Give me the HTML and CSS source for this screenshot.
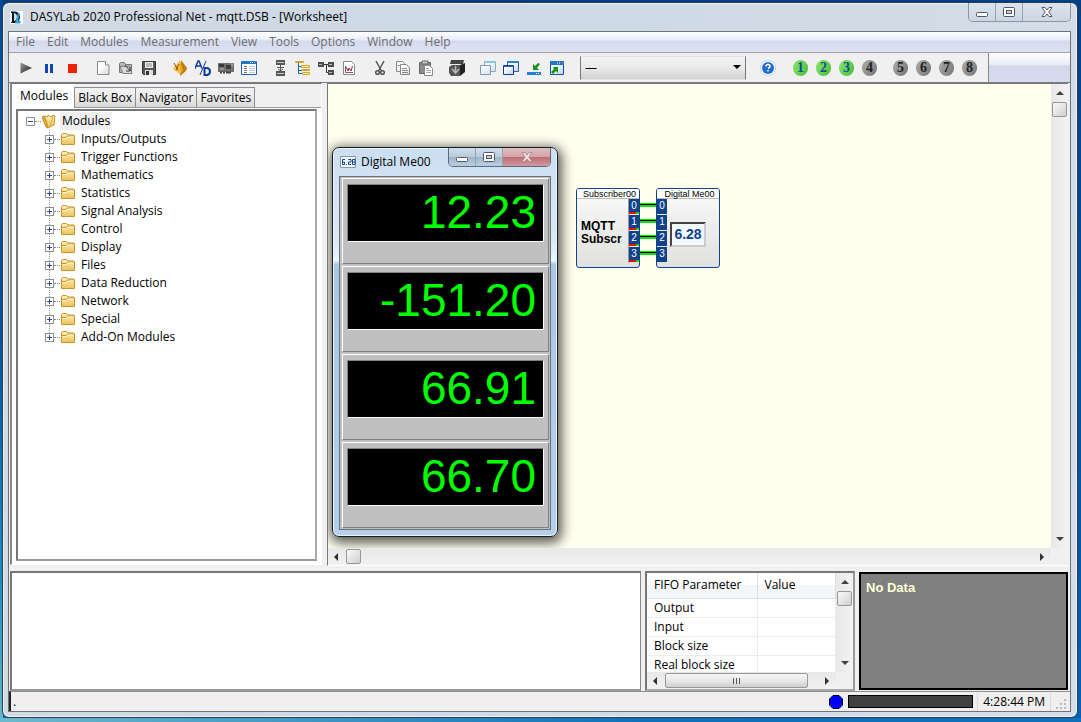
FILE: index.html
```html
<!DOCTYPE html>
<html lang="en">
<head>
<meta charset="utf-8">
<title>DASYLab 2020 Professional Net - mqtt.DSB - [Worksheet]</title>
<link rel="stylesheet" href="styles.css">
</head>
<body>
<svg class="defs" width="0" height="0" aria-hidden="true">
  <defs>
    <linearGradient id="fold" x1="0" y1="0" x2="0" y2="1"><stop offset="0" stop-color="#fdf0b8"/><stop offset="1" stop-color="#ecc25c"/></linearGradient>
    <linearGradient id="dark" x1="0" y1="0" x2="1" y2="1"><stop offset="0" stop-color="#999"/><stop offset="1" stop-color="#222"/></linearGradient>
    <linearGradient id="paper" x1="0" y1="0" x2="1" y2="1"><stop offset="0.4" stop-color="#fff"/><stop offset="1" stop-color="#d4d4d4"/></linearGradient>
    <linearGradient id="pane" x1="0" y1="0" x2="1" y2="1"><stop offset="0.3" stop-color="#fff"/><stop offset="1" stop-color="#c2cde6"/></linearGradient>
    <symbol id="folder" viewBox="0 0 16 16"><path d="M.5 13.500v-10l1-1h4l1.500 1.500h6l.5.500v9z" fill="url(#fold)" stroke="#c9962b"/><path d="M1 6.500h4l1.500-1.500H13" fill="none" stroke="#c9962b"/><path d="M1.500 7.500h4l1.500-1.500h5.500" fill="none" stroke="#fff6cc"/></symbol>
    <symbol id="up" viewBox="0 0 8 8"><path d="M4 2l4 4H0z" fill="#404040"/></symbol>
    <symbol id="down" viewBox="0 0 8 8"><path d="M4 6L0 2h8z" fill="#404040"/></symbol>
    <symbol id="left" viewBox="0 0 8 8"><path d="M2 4l4-4v8z" fill="#303030"/></symbol>
    <symbol id="right" viewBox="0 0 8 8"><path d="M6 4L2 0v8z" fill="#303030"/></symbol>
    <symbol id="min" viewBox="0 0 14 12"><rect x="1.500" y="6.500" width="11" height="4" rx="1" fill="#fff" stroke="#535666"/></symbol>
    <symbol id="max" viewBox="0 0 14 12"><rect x="1.500" y="1.500" width="11" height="9" rx="1" fill="#fff" stroke="#535666"/><rect x="4.500" y="4.500" width="5" height="3" fill="#c9d3e0" stroke="#535666"/></symbol>
    <symbol id="close" viewBox="0 0 14 12"><path d="M2 1.500h3L7 4l2-2.500h3L8.800 6l3.200 4.500H9L7 8l-2 2.500H2L5.200 6z" fill="#fff" stroke="#535666"/></symbol>
    <symbol id="closeoff" viewBox="0 0 14 12"><path d="M2 1.500h3L7 4l2-2.500h3L8.800 6l3.200 4.500H9L7 8l-2 2.500H2L5.200 6z" fill="#f1dede" stroke="#b08f96"/></symbol>
  </defs>
</svg>
<div class="window">
  <header class="titlebar">
    <svg class="logo" width="13" height="13" viewBox="0 0 13 13"><path fill="#fff" d="M0 0h13v13H0z"/><path d="M1 .5h4q5 .5 5 5.500T5 12H1v-1h1V2H1z" fill="#101820"/><path d="M4 2q3 .5 3 4T4 10z" fill="#c5dcea"/><path d="M8 2h2l-2 8h3l-1 2.500H5z" fill="#37a2d2"/></svg>
    <h1>DASYLab 2020 Professional Net - mqtt.DSB - [Worksheet]</h1>
    <div class="caption">
      <button aria-label="Minimize"><svg width="14" height="12"><use href="#min"/></svg></button>
      <button aria-label="Restore"><svg width="14" height="12"><use href="#max"/></svg></button>
      <button class="wide" aria-label="Close"><svg width="14" height="12"><use href="#close"/></svg></button>
    </div>
  </header>
  <div class="client">
    <nav class="menu"><button>File</button><button>Edit</button><button>Modules</button><button>Measurement</button><button>View</button><button>Tools</button><button>Options</button><button>Window</button><button>Help</button></nav>
    <div class="toolrow">
      <div class="toolbar">
        <div class="group">
          <button aria-label="Start"><svg viewBox="0 0 16 16"><path d="M2.500 2.500L14 8 2.500 13.500z" fill="url(#dark)"/></svg></button>
          <button aria-label="Pause"><svg viewBox="0 0 16 16"><path d="M4 4h3v9H4zM9 4h3v9H9z" fill="#0b47b4"/></svg></button>
          <button aria-label="Stop"><svg viewBox="0 0 16 16"><path d="M4 4h9v9H4z" fill="#ec2200"/></svg></button>
        </div>
        <div class="group">
          <button aria-label="New"><svg viewBox="0 0 16 16"><path d="M2.500 1.500h8l3.500 3.500v9.500H2.500z" fill="url(#paper)" stroke="#8b8b8b"/><path d="M10.500 1.500V5H14" fill="#fff" stroke="#8b8b8b"/></svg></button>
          <button aria-label="Open"><svg viewBox="0 0 16 16"><path d="M1.500 12.500v-9l1-1h4l1 2h6v8z" fill="#b5b5b5" stroke="#777"/><path d="M2 6.500h9l3 7H5z" fill="#d8d8d8" stroke="#808080"/><path d="M7 5l5 6m0-4v4H8" fill="none" stroke="#444"/></svg></button>
          <button aria-label="Save"><svg viewBox="0 0 16 16"><path d="M1.500 1.500h13v13h-12l-1-1z" fill="#555" stroke="#333"/><path d="M4 2h8v6H4z" fill="#eee"/><path d="M5 4h6M5 6h6" stroke="#888"/><path d="M4 10h8v5H4z" fill="#ddd"/><path d="M5 11h3v4H5z" fill="#333"/></svg></button>
        </div>
        <div class="group">
          <button aria-label="Wizard"><svg viewBox="0 0 16 16"><path d="M8 0l1 15-8-6z" fill="#f1c14a"/><path d="M9 0l6 8-1 3-6 5z" fill="#c07e10"/><path d="M8 1l3 9-3 5z" fill="#e6a824"/><path d="M2 3l4 7M7 4L4 10" stroke="#a34d00"/></svg></button>
          <button aria-label="A/D"><svg viewBox="0 0 16 16" fill="none" stroke="#103d9c"><path d="M0 8.500L3 1h1L7 8.500M1 6h5" stroke-width="1.500"/><path d="M11 1L5 15"/><path d="M9.500 8v7H12q3-.5 3-3.500T12 8z" stroke-width="2"/></svg></button>
          <button aria-label="Hardware"><svg viewBox="0 0 16 16"><path d="M0 3h16v9H0z" fill="#707070"/><path d="M1 4h5v3H1zM8 5h5v4H8z" fill="#3b3b3b"/><path d="M13 4h2M13 6h2M2 9h4" stroke="#bbb"/><path d="M2 12.500h2m1 0h2m1 0h5" stroke="#444" stroke-width="2"/></svg></button>
          <button aria-label="Layout"><svg viewBox="0 0 16 16"><path d="M.5 1.500h15v13H.5z" fill="#fff" stroke="#1d64bd"/><path d="M1 1h14v3H1z" fill="#1f77d0"/><path d="M9 2.500h1m1 0h1" stroke="#fff"/><path d="M13 2.500h1" stroke="#f73"/><path d="M3 6.500h3M3 8.500h3M3 10.500h3M3 12.500h3" stroke="#777"/><path d="M8 6.500h6M8 8.500h6M8 10.500h6M8 12.500h6" stroke="#b5cdea"/></svg></button>
        </div>
        <div class="group">
          <button aria-label="Align modules"><svg viewBox="0 0 16 16"><path d="M4 0h9v5H4zM4 11h9v5H4z" fill="#555"/><path d="M5 2.500h7M5 13.500h7" stroke="#ccc"/><path d="M8.500 5v6M5 7.500h7M6 9l2.500 2L11 9" fill="none" stroke="#555"/></svg></button>
          <button aria-label="Tree"><svg viewBox="0 0 16 16"><path d="M3.500 3v10.500h4M3.500 6.500h4M3.500 10.500h4" fill="none" stroke="#1966b2"/><path d="M6.500 5.500h8v2h-8zM7.500 9.500h7v1h-7zM7.500 12.500h7v2h-7z" fill="#fff6b0" stroke="#d7a02a"/><path d="M.5 1.500h8v1h-8z" fill="#ffe486" stroke="#d7a02a"/></svg></button>
          <button aria-label="Connect"><svg viewBox="0 0 16 16"><path d="M0 2h6v5H0zM10 2h6v5h-6zM10 10h6v5h-6z" fill="#4d4d4d"/><path d="M6 4.500h4M8.500 4v8.500H10" fill="none" stroke="#333"/><path d="M1 4.500h3m7 0h3m-3 8h3" stroke="#bbb"/></svg></button>
          <button aria-label="Chart"><svg viewBox="0 0 16 16"><path d="M2.500 1.500h8l3 3v10h-11z" fill="#fff" stroke="#888"/><path d="M4.500 6v6.500H12" fill="none" stroke="#666"/><path d="M5 7l2 4 1-3 2 3 1.500-5" fill="none" stroke="#b01530"/></svg></button>
        </div>
        <div class="group">
          <button aria-label="Cut"><svg viewBox="0 0 16 16" fill="none" stroke="#555" stroke-width="1.500"><path d="M4 1l5.500 10M12 1L6.500 11"/><circle cx="5.500" cy="12.500" r="1.800"/><circle cx="10.500" cy="12.500" r="1.800"/></svg></button>
          <button aria-label="Copy"><svg viewBox="0 0 16 16" fill="url(#paper)" stroke="#888"><path d="M1.500 1.500h6l2 2v8h-8z"/><path d="M5.500 4.500h6l3 3v7h-9z"/><path d="M7 8.500h5M7 10.500h6M7 12.500h6M3 5.500h2"/></svg></button>
          <button aria-label="Paste"><svg viewBox="0 0 16 16"><path d="M1.500 2.500h11v11h-11z" fill="#8b8b8b" stroke="#666"/><path d="M4 1h6v3H4z" fill="#ccc" stroke="#666"/><path d="M6.500 5.500h5l3 3v7h-8z" fill="#fff" stroke="#888"/><path d="M8 8.500h3M8 10.500h5M8 12.500h5" stroke="#aaa"/></svg></button>
        </div>
        <div class="group">
          <button aria-label="Black box"><svg viewBox="0 0 16 16"><path d="M2 0h13l-1 4H1z" fill="#444"/><path d="M0 7l3-2h8v11H2l-2-3z" fill="#555"/><path d="M11 5l5-2v9l-5 4z" fill="#222"/><path d="M6.500 6v6M3 9l3.500 4L10 9" stroke="#bbb" stroke-width="1.500" fill="none"/></svg></button>
        </div>
        <div class="group">
          <button aria-label="Hide windows"><svg viewBox="0 0 16 16" opacity=".55"><path d="M4.500 1.500h11v10h-11z" fill="url(#pane)" stroke="#2878c0"/><path d="M4 2h12" stroke="#3ba1e8" stroke-width="2"/><path d="M.5 5.500h10v9H.5z" fill="url(#pane)" stroke="#1e4f9c"/></svg></button>
          <button aria-label="Show windows"><svg viewBox="0 0 16 16"><path d="M4.500 1.500h11v10h-11z" fill="url(#pane)" stroke="#1f65bd"/><path d="M4 2h12" stroke="#2283d5" stroke-width="2"/><path d="M.5 5.500h10v9H.5z" fill="url(#pane)" stroke="#103e93"/><path d="M1 6.500h9" stroke="#2368ba"/></svg></button>
          <button aria-label="Minimize all"><svg viewBox="0 0 16 16"><path d="M1 12h14v3H1z" fill="#2480d5"/><path d="M10 13.500h1m1 0h1" stroke="#fff"/><path d="M7 4v6h6l-2-2 3-4-2-1-3 3z" fill="#10951e"/></svg></button>
          <button aria-label="Restore all"><svg viewBox="0 0 16 16"><path d="M1.500 1.500h13v13h-13z" fill="url(#pane)" stroke="#1153a9"/><path d="M1 1h14v4H1z" fill="#2277cd"/><path d="M8 3h1m1 0h1" stroke="#fff"/><path d="M13 3h1" stroke="#f72"/><path d="M4 7h5v6L7 11l-3 3-2-2 3-3z" fill="#10951e"/></svg></button>
        </div>
        <select class="combo" aria-label="Window list"><option>—</option></select>
        <div class="group help"><button aria-label="Help"><svg viewBox="0 0 16 16"><circle cx="8" cy="8" r="7.500" fill="#fff" stroke="#bdd0ee"/><circle cx="8" cy="8" r="6" fill="#226cce"/><path d="M6 6.500q0-2 2-2t2 2q0 1-2 2M8 10v1.500" fill="none" stroke="#fff" stroke-width="1.500"/></svg></button></div>
        <div class="group nums"><button class="on"><span>1</span></button><button class="on"><span>2</span></button><button class="on"><span>3</span></button><button><span>4</span></button></div>
        <div class="group nums"><button><span>5</span></button><button><span>6</span></button><button><span>7</span></button><button><span>8</span></button></div>
      </div>
    </div>
    <main class="work">
      <aside class="browser">
        <div class="tabs"><button class="active">Modules</button><button>Black Box</button><button>Navigator</button><button>Favorites</button></div>
        <div class="treebox">
          <div class="root"><button class="toggle" aria-label="Collapse"><svg width="9" height="9" viewBox="0 0 9 9"><path d="M.5.5h8v8h-8z" fill="#fff" stroke="#919191"/><path d="M2 4.500h5" stroke="#29479b"/></svg></button><i></i><svg width="16" height="16" viewBox="0 0 16 16"><path d="M0 4l4 10 2 1-1-8-3-4z" fill="#e0ac3e" stroke="#c18d26"/><path d="M2 3l3 1 1-2 3 2 2-2 2 1-1 9-6 3-2-8z" fill="url(#fold)" stroke="#c9962b"/><path d="M11 3L8 13" stroke="#d8a53b"/></svg><span>Modules</span></div>
          <ul class="tree">
            <li><button class="toggle plus" aria-label="Expand"></button><i></i><svg width="16" height="16"><use href="#folder"/></svg><span>Inputs/Outputs</span></li>
            <li><button class="toggle plus" aria-label="Expand"></button><i></i><svg width="16" height="16"><use href="#folder"/></svg><span>Trigger Functions</span></li>
            <li><button class="toggle plus" aria-label="Expand"></button><i></i><svg width="16" height="16"><use href="#folder"/></svg><span>Mathematics</span></li>
            <li><button class="toggle plus" aria-label="Expand"></button><i></i><svg width="16" height="16"><use href="#folder"/></svg><span>Statistics</span></li>
            <li><button class="toggle plus" aria-label="Expand"></button><i></i><svg width="16" height="16"><use href="#folder"/></svg><span>Signal Analysis</span></li>
            <li><button class="toggle plus" aria-label="Expand"></button><i></i><svg width="16" height="16"><use href="#folder"/></svg><span>Control</span></li>
            <li><button class="toggle plus" aria-label="Expand"></button><i></i><svg width="16" height="16"><use href="#folder"/></svg><span>Display</span></li>
            <li><button class="toggle plus" aria-label="Expand"></button><i></i><svg width="16" height="16"><use href="#folder"/></svg><span>Files</span></li>
            <li><button class="toggle plus" aria-label="Expand"></button><i></i><svg width="16" height="16"><use href="#folder"/></svg><span>Data Reduction</span></li>
            <li><button class="toggle plus" aria-label="Expand"></button><i></i><svg width="16" height="16"><use href="#folder"/></svg><span>Network</span></li>
            <li><button class="toggle plus" aria-label="Expand"></button><i></i><svg width="16" height="16"><use href="#folder"/></svg><span>Special</span></li>
            <li><button class="toggle plus" aria-label="Expand"></button><i></i><svg width="16" height="16"><use href="#folder"/></svg><span>Add-On Modules</span></li>
          </ul>
        </div>
      </aside>
      <section class="sheet">
        <div class="canvas">
          <div class="block subscriber">
            <h2>Subscriber00</h2>
            <div class="body"><p>MQTT<br>Subscr</p><ol class="ports out"><li>0</li><li>1</li><li>2</li><li>3</li></ol></div>
          </div>
          <div class="wires"><b></b><b></b><b></b><b></b></div>
          <div class="block meter">
            <h2>Digital Me00</h2>
            <div class="body"><ol class="ports"><li>0</li><li>1</li><li>2</li><li>3</li></ol><div class="face">6.28</div></div>
          </div>
          <div class="float">
            <div class="floatbar">
              <svg width="16" height="12" viewBox="0 0 16 12"><path d="M.5.500h15v11H.5z" fill="#f4faff" stroke="#8b97a8"/><path d="M5 3.500H2.500v5h2v-2.500h-2M6.500 8v1M11 3.500H8.500V4M11 3.500V6H8.500v2.500H11M12.500 3.500H15v5h-2.500zM12.500 6H15" fill="none" stroke="#1d449c"/></svg>
              <h2>Digital Me00</h2>
              <div class="caption">
                <button aria-label="Minimize meter"><svg width="14" height="12"><use href="#min"/></svg></button>
                <button aria-label="Restore meter"><svg width="14" height="12"><use href="#max"/></svg></button>
                <button class="wide red" aria-label="Close meter"><svg width="14" height="12"><use href="#closeoff"/></svg></button>
              </div>
            </div>
            <div class="meters">
              <div class="cell"><output>12.23</output></div>
              <div class="cell"><output>-151.20</output></div>
              <div class="cell"><output>66.91</output></div>
              <div class="cell"><output>66.70</output></div>
            </div>
          </div>
        </div>
        <div class="vscroll"><svg width="8" height="8"><use href="#up"/></svg><div class="thumb"></div><svg class="end" width="8" height="8"><use href="#down"/></svg></div>
        <div class="hscroll"><svg width="8" height="8"><use href="#left"/></svg><div class="thumb"></div><svg class="end" width="8" height="8"><use href="#right"/></svg></div>
        <div class="corner"></div>
      </section>
    </main>
    <section class="bottom">
      <div class="log"></div>
      <div class="fifo">
        <div class="fifoview">
          <table>
            <thead><tr><th>FIFO Parameter</th><th>Value</th></tr></thead>
            <tbody><tr><td>Output</td><td></td></tr><tr><td>Input</td><td></td></tr><tr><td>Block size</td><td></td></tr><tr><td>Real block size</td><td></td></tr></tbody>
          </table>
        </div>
        <div class="vscroll"><svg width="8" height="8"><use href="#up"/></svg><div class="thumb"></div><svg class="end" width="8" height="8"><use href="#down"/></svg></div>
        <div class="hscroll"><svg width="8" height="8"><use href="#left"/></svg><div class="thumb long"><svg width="8" height="6" viewBox="0 0 8 6"><path d="M.5 0v6M3.500 0v6M6.500 0v6" stroke="#555"/></svg></div><svg class="end" width="8" height="8"><use href="#right"/></svg></div>
        <div class="corner"></div>
      </div>
      <div class="nodata">No Data</div>
    </section>
    <footer class="status">
      <span class="hint">.</span>
      <svg class="lamp" width="14" height="14" viewBox="0 0 14 14"><path d="M4 .5h6l3.500 3.500v6L10 13.500H4L.5 10V4z" fill="#00f" stroke="#000"/></svg>
      <div class="load"></div>
      <time>4:28:44 PM</time>
      <svg class="grip" width="12" height="12" viewBox="0 0 12 12"><path d="M8 1h2v2H8zM4 5h2v2H4zM8 5h2v2H8zM0 9h2v2H0zM4 9h2v2H4zM8 9h2v2H8z" fill="#bbb"/></svg>
    </footer>
  </div>
</div>
</body>
</html>
```
FILE: styles.css
```css
* { box-sizing: border-box; }
html, body { height: 100%; }
body {
  margin: 0;
  padding: 2px 3px 4px 2px;
  background: linear-gradient(90deg, #6db9cc, #0d70b8 60%) left bottom / 100% 4px no-repeat, linear-gradient(#004a9a, #01509c 45%, #1c8fc0 80%, #67b6c8) left / 3px 100% no-repeat, linear-gradient(#003f86, #0360b4) #004a96;
  font: 12px/18px "Open Sans", "Noto Sans", sans-serif;
  color: #000;
  overflow: hidden;
}
h1, h2, p, ul, ol { margin: 0; padding: 0; font: inherit; }
ul, ol { list-style: none; }
button { margin: 0; padding: 0; border: 0; background: none; font: inherit; color: inherit; }
svg { display: block; flex: none; }
.defs { position: absolute; }

.window {
  height: 100%;
  display: flex;
  flex-direction: column;
  padding: 0 6px 5px 5px;
  border: 1px solid #2b3b4c;
  border-radius: 7px;
  background: linear-gradient(100deg, #d2dae4, #cdd9e6 40%, #d5dee8);
  box-shadow: inset 0 0 0 1px #eef4fa;
}
.titlebar { display: flex; height: 28px; flex: none; align-items: flex-start; padding-left: 2px; }
.logo { margin-top: 8px; }
.titlebar h1 { flex: 1; margin: 5px 0 0 7px; white-space: nowrap; }
.caption { display: flex; height: 19px; border: 1px solid #8b96a5; border-top: 0; border-radius: 0 0 5px 5px; overflow: hidden; }
.caption button { width: 27px; display: flex; align-items: center; justify-content: center; border-right: 1px solid #98a3b1; background: linear-gradient(#dae3ed, #ccd7e3); }
.caption .wide { width: 47px; border-right: 0; }

.client { flex: 1; min-height: 0; display: flex; flex-direction: column; border: 1px solid #6e737a; background: #f0f0f0; }
.menu { flex: none; display: flex; gap: 12px; height: 20px; padding-left: 7px; background: linear-gradient(#fff, #e8ecf6 40%, #d4daee 45%, #dde3f3); color: #6d6d6d; }
.toolrow { flex: none; height: 31px; display: flex; border-top: 1px solid #a0a0a8; border-bottom: 1px solid #7c7c80; background: linear-gradient(#fff, #e8ecf6 40%, #d2d8ea 45%, #d6dcee); }
.toolbar { display: flex; gap: 8px; align-items: center; padding: 0 7px 0 5px; border-right: 1px solid #888; background: #f0f0f0; }
.group { display: flex; }
.group button { width: 23px; height: 23px; display: flex; align-items: center; justify-content: center; }
.group button svg { width: 16px; height: 16px; }
.combo { width: 166px; height: 24px; margin: 0 2px 0 4px; padding: 0 4px; border: 1px solid #8a8a8a; border-color: #e2e2e2 #777; border-radius: 0; appearance: none; font: inherit; color: #000; background: url("data:image/svg+xml,%3Csvg xmlns='http://www.w3.org/2000/svg' width='8' height='5'%3E%3Cpath d='M0 0h8L4 4z'/%3E%3C/svg%3E") right 4px center no-repeat, linear-gradient(#f4f4f4, #e9e9e9 50%, #d2d2d2); }
.help { margin-right: 2px; }
.nums span { width: 15px; height: 16px; border-radius: 8px; background: linear-gradient(120deg, #adadad, #757575); font: bold 14px/16px "Liberation Serif", serif; color: #222; }
.nums .on span { background: linear-gradient(120deg, #8ae870, #4abb38); color: #0d4f97; }

.work { flex: 1; min-height: 0; display: flex; gap: 5px; padding: 0 2px 0 1px; }
.browser { width: 312px; flex: none; display: flex; flex-direction: column; border: 1px solid #fff; border-top: 1px solid #777; border-left: 2px solid #888; margin-bottom: 6px; background: #fff; }
.tabs { display: flex; align-items: flex-end; height: 24px; flex: none; background: #f0f0f0; border-bottom: 1px solid #9a9aa2; }
.tabs button { height: 20px; padding: 0 3px; border: 1px solid #898c95; border-bottom: 0; background: linear-gradient(#f2f2f2, #ebebeb 50%, #d8d8d8); white-space: nowrap; }
.tabs button + button + button { border-left: 0; }
.tabs .active { height: 24px; padding: 0 5px 2px 7px; border-color: #fff; background: #fff; margin-bottom: -1px; }
.treebox { flex: 1; margin: 1px 4px 3px 4px; border: 2px solid #777; border-right-color: #aaa; border-bottom-color: #999; padding: 1px 8px; }
.root, .tree li { display: flex; align-items: center; height: 18px; white-space: nowrap; }
.root i, .tree i { width: 6px; margin-right: 1px; border-top: 1px dotted #888; }
.root span { margin-left: 2px; padding: 0 2px; background: #f0f0f0; }
.tree { margin-left: 19px; background: linear-gradient(#999 50%, transparent 50%) 4px 0 / 1px 2px repeat-y; }
.tree li:last-child { background: linear-gradient(#fff, #fff) 0 100% / 9px 8px no-repeat; }
.tree span { margin-left: 4px; }
.toggle { width: 9px; height: 9px; }
.plus { border: 1px solid #919191; background: linear-gradient(#29479b, #29479b) center / 5px 1px no-repeat, linear-gradient(#29479b, #29479b) center / 1px 5px no-repeat, #fff; }

.sheet { flex: 1; min-width: 0; display: grid; grid-template-columns: 1fr 17px; grid-template-rows: 1fr 17px; margin-bottom: 5px; border: 1px solid #777; border-right: 0; border-bottom: 1px solid #fff; }
.canvas { position: relative; background: #fffff0; overflow: hidden; }
.vscroll, .hscroll { display: flex; align-items: center; background: #f0f0f0; }
.vscroll { flex-direction: column; padding: 5px 0; background: linear-gradient(90deg, #e8e8e8, #f2f2f2); }
.hscroll { padding: 0 5px 0 4px; background: linear-gradient(#e8e8e8, #f2f2f2); }
.thumb { width: 15px; height: 15px; margin: 5px; border: 1px solid #979797; border-radius: 2px; background: linear-gradient(135deg, #fafafa, #cfcfcf); }
.hscroll .thumb { margin-left: 6px; }
.end { margin-top: auto; }
.hscroll .end { margin-top: 0; margin-left: auto; }
.corner { background: #f0f0f0; }

.block { position: absolute; top: 104px; width: 64px; height: 80px; border: 1px solid #10418b; border-radius: 3px; background: linear-gradient(#fafafa, #e0e0de); overflow: hidden; }
.subscriber { left: 248px; }
.meter { left: 328px; }
.block h2 { height: 10px; padding-left: 3px; background: #fff; font: 9px/10px "Liberation Sans", Arial, sans-serif; text-align: center; white-space: nowrap; border-bottom: 1px solid #bbb; }
.body { display: flex; }
.body p { flex: 1; align-self: center; padding: 4px 0 0 4px; font: bold 12px/13px "Liberation Sans", Arial, sans-serif; }
.ports { width: 10px; flex: none; }
.ports li { height: 15px; margin-bottom: 1px; background: #10418b; color: #fff; font: 10px/14px "Liberation Sans", Arial, sans-serif; text-align: center; }
.out { width: 11px; border-left: 1px solid #999; }
.out li { background: linear-gradient(90deg, #f00 70%, #0d0 70%) 0 13px / 100% 2px no-repeat, #10418b; }
.face { width: 36px; height: 25px; margin: 23px 0 0 3px; border: 2px solid #444; border-right-color: #ccc; border-bottom-color: #ccc; background: #f2faff; color: #103f94; font: bold 14px/21px "Liberation Sans", Arial, sans-serif; text-align: center; }
.wires { position: absolute; left: 312px; top: 119px; width: 16px; display: grid; gap: 12px; }
.wires b { height: 4px; background: linear-gradient(#00e600 1px, #000 1px, #000 2px, #00e600 2px); }

.float { position: absolute; left: 4px; top: 63px; width: 226px; padding: 0 6px 6px; border: 1px solid #141c28; border-radius: 7px; background: linear-gradient(#cbdff2, #dbe8f5 24%, #eef5fc 29%, #a9c6e3 30%, #b5d0ea); box-shadow: inset 0 0 0 1px #ecf5fd, 1px 3px 12px 3px rgba(0, 0, 0, .65); }
.floatbar { display: flex; height: 28px; align-items: flex-start; }
.floatbar > svg { margin: 8px 0 0 1px; }
.floatbar h2 { flex: 1; margin: 5px 0 0 5px; white-space: nowrap; }
.floatbar .caption { border-color: #5c6c80; }
.floatbar .caption button { background: linear-gradient(#d0deeb, #b8cbdc 48%, #9eb3c8 50%, #b8cfe2); }
.floatbar .caption .red { background: linear-gradient(#e0bfc2, #d3a3a8 48%, #bd6a72 50%, #d29b9f); }
.meters { padding: 1px 0 0 2px; border: 1px solid #687078; background: #c0c0c0; }
.cell { height: 86px; margin: 0 1px 2px 0; padding: 5px 4px 4px 4px; border: 1px solid #808080; border-top-color: #fff; border-left-color: #fff; }
.cell output { display: block; height: 58px; padding-right: 7px; background: #000; border: 1px solid #808080; border-right-color: #fff; border-bottom-color: #fff; color: #0f0; font: 46px/54px "Liberation Sans", Arial, sans-serif; text-align: right; }
.cell:last-child { margin-bottom: 1px; }

.bottom { flex: none; height: 120px; display: flex; gap: 4px; padding: 0 2px 0 1px; }
.log { flex: 1; border: 2px solid #777; border-right: 1px solid #888; border-bottom: 2px solid #999; background: #fff; }
.fifo { width: 210px; flex: none; display: grid; grid-template-columns: 1fr 17px; grid-template-rows: 1fr 17px; border: 2px solid #777; border-right-color: #999; border-bottom-color: #aaa; }
.fifoview { overflow: hidden; background: #fff; }
.fifo table { width: 100%; border-collapse: collapse; table-layout: fixed; }
.fifo th, .fifo td { padding: 0 5px 0 7px; border-right: 1px solid #ececec; border-bottom: 1px solid #ececec; font-weight: normal; text-align: left; white-space: nowrap; }
.fifo th { height: 25px; background: linear-gradient(#fff 50%, #f5f6f8 50%); border-color: #dcdfe4; }
.fifo td { height: 19px; line-height: 18px; }
.fifo th:first-child { width: 110px; }
.thumb.long { width: 143px; display: flex; align-items: center; justify-content: center; background: linear-gradient(#f6f6f6, #e8e8e8 50%, #cfcfcf); }
.nodata { width: 209px; flex: none; margin: 1px 0; padding: 5px; border: 2px solid #000; background: #808080; color: #ffffd6; font: bold 13px/18px "Liberation Sans", Arial, sans-serif; }

.status { flex: none; display: flex; align-items: center; height: 20px; border-top: 1px solid #8d8d93; border-left: 2px solid #222; background: #f0eeee; }
.hint { flex: 1; padding-left: 2px; }
.load { width: 125px; height: 13px; margin-left: 5px; border: 1px solid #000; background: #404040; }
.status time { margin-left: 4px; padding: 0 5px; border-left: 1px solid #dadada; border-right: 1px solid #dadada; white-space: nowrap; }
.grip { margin: 4px 2px 0 5px; }
```
